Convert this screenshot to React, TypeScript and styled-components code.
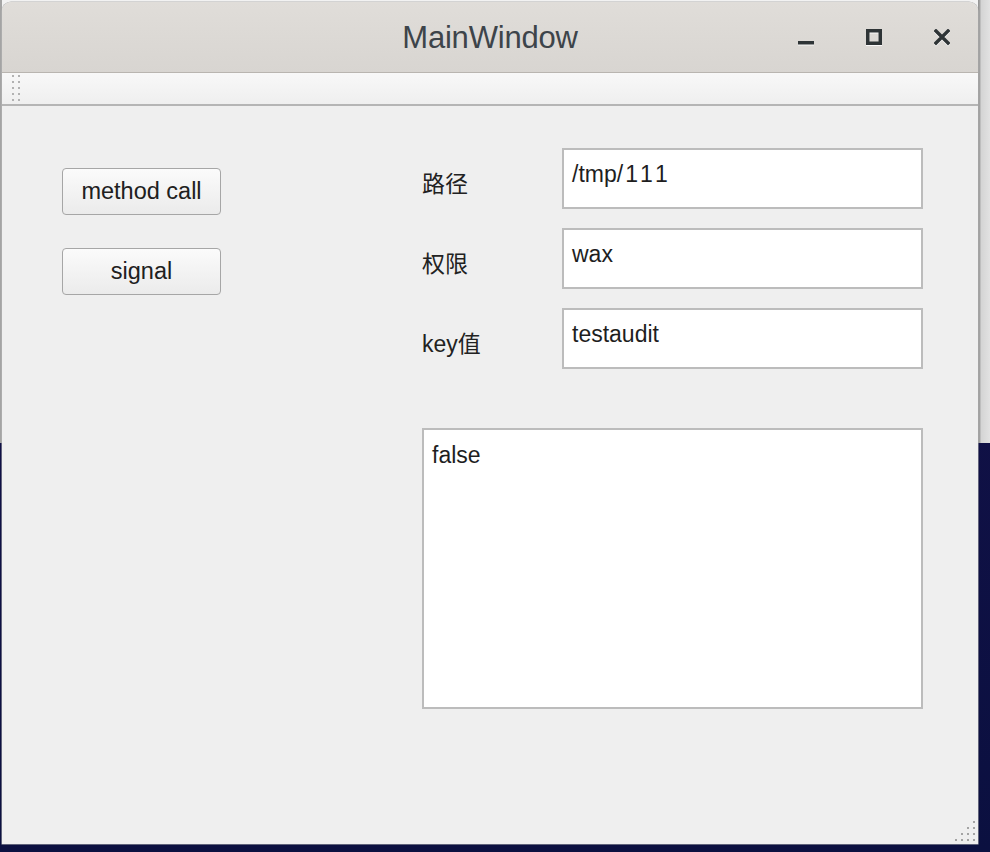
import React from "react";
import styled, { createGlobalStyle } from "styled-components";

const GlobalStyle = createGlobalStyle`
  html, body { margin: 0; padding: 0; }
  body { background: #111146; font-family: "Liberation Sans", Arial, sans-serif; }
  * { box-sizing: border-box; }
`;

const Desktop = styled.div`
  position: relative;
  width: 990px;
  height: 852px;
  padding: 2px 12px 8px 2px;
  background: linear-gradient(#15114b, #0b1040);
  overflow: hidden;
`;

const BackWindow = styled.div`
  position: absolute;
  top: 0;
  left: 0;
  width: 990px;
  height: 443px;
  background: linear-gradient(
    to right,
    #a4a4a4 0,
    #a4a4a4 2px,
    #f2f2f2 2px,
    #f2f2f2 978px,
    #8f8f8f 978px,
    #a8a8a8 980px,
    #d4d4d4 981px,
    #e2e2e2 990px
  );
`;

const Window = styled.div`
  position: relative;
  z-index: 1;
  width: 976px;
  height: 842px;
  display: flex;
  flex-direction: column;
  border-radius: 9px 9px 0 0;
  overflow: hidden;
  background: #efefef;
  box-shadow: 0 0 0 0.5px #b4b4b4;
`;

const TitleBar = styled.div`
  height: 71px;
  flex: none;
  display: grid;
  grid-template-columns: 1fr auto 1fr;
  align-items: center;
  background: linear-gradient(#e0ddd9, #d8d5d1);
  border-bottom: 1px solid #b9b5b0;
`;

const Title = styled.div`
  grid-column: 2;
  font-family: "Liberation Sans", Arial, sans-serif;
  font-size: 31px;
  color: #3d444a;
  letter-spacing: -0.2px;
  line-height: 1;
`;

const Controls = styled.div`
  grid-column: 3;
  justify-self: end;
  display: flex;
  gap: 52px;
  padding-right: 28px;
  align-items: center;
`;

const ControlButton = styled.span`
  width: 16px;
  height: 17px;
  display: block;
  filter: drop-shadow(0 1px 0 rgba(255, 255, 255, 0.85));
  svg { display: block; }
`;

const ToolBar = styled.div`
  height: 33px;
  flex: none;
  display: flex;
  align-items: flex-start;
  padding-left: 10px;
  background: linear-gradient(#f8f8f8, #efefef);
  border-bottom: 2px solid #b5b5b5;
`;

const Content = styled.div`
  flex: 1;
  display: flex;
  padding: 42px 0 0 60px;
  background: #efefef;
`;

const LeftColumn = styled.div`
  width: 360px;
  flex: none;
  display: flex;
  flex-direction: column;
  gap: 33px;
  padding-top: 20px;
`;

const PushButton = styled.button`
  width: 159px;
  height: 47px;
  border: 1px solid #a6a6a6;
  border-radius: 4px;
  background: linear-gradient(#fbfbfb, #ebebeb);
  font-family: "Liberation Sans", Arial, sans-serif;
  font-size: 23.5px;
  color: #202020;
  padding: 0;
  cursor: pointer;
`;

const Form = styled.div`
  display: grid;
  grid-template-columns: 140px 361px;
  row-gap: 19px;
  align-content: start;
`;

const Label = styled.div`
  font-family: "Liberation Sans", "Noto Sans CJK SC", sans-serif;
  font-size: 23px;
  color: #222;
  align-self: center;
  margin-top: 6px;
`;

const LineEdit = styled.div`
  width: 361px;
  height: 61px;
  border: 2px solid #bcbcbc;
  background: #fff;
  padding: 11px 8px 0;
  font-family: "Liberation Sans", Arial, sans-serif;
  font-size: 23px;
  line-height: 26px;
  color: #1e1e1e;
  white-space: pre;
`;

const WideDigits = styled.span`
  letter-spacing: 3.8px;
  margin-left: 2px;
`;

const TextArea = styled.textarea`
  grid-column: 1 / span 2;
  margin-top: 40px;
  width: 501px;
  height: 281px;
  border: 2px solid #bcbcbc;
  background: #fff;
  padding: 12px 8px;
  font-family: "Liberation Sans", Arial, sans-serif;
  font-size: 23px;
  line-height: 26px;
  color: #1e1e1e;
  resize: none;
  outline: none;
  border-radius: 0;
`;

const SizeGrip = styled.div`
  position: absolute;
  right: 3px;
  bottom: 3px;
  width: 20px;
  height: 20px;
  svg { display: block; }
`;

function Grip() {
  const dots = [];
  for (let r = 0; r < 5; r++) {
    for (let c = 0; c < 2; c++) {
      dots.push(<rect key={`${r}-${c}`} x={c * 6} y={r * 6 + 2} width={2} height={2} fill="#b2b2b2" />);
    }
  }
  return (
    <svg width="8" height="32" viewBox="0 0 8 32">
      {dots}
    </svg>
  );
}

function SizeGripDots() {
  const pts: [number, number][] = [];
  for (let r = 0; r < 4; r++) {
    for (let c = 3 - r; c < 4; c++) {
      pts.push([c * 6, r * 6]);
    }
  }
  return (
    <svg width="20" height="20" viewBox="0 0 20 20">
      {pts.map(([x, y]) => (
        <rect key={`${x}-${y}`} x={x} y={y} width={2} height={2} fill="#a4a4a4" />
      ))}
    </svg>
  );
}

export default function App() {
  return (
    <>
      <GlobalStyle />
      <Desktop>
        <BackWindow />
        <Window>
          <TitleBar>
            <Title>MainWindow</Title>
            <Controls>
              <ControlButton title="Minimize">
                <svg width="16" height="17" viewBox="0 0 16 17">
                  <rect x="0" y="12" width="16" height="3.5" fill="#2e3436" />
                </svg>
              </ControlButton>
              <ControlButton title="Maximize">
                <svg width="16" height="17" viewBox="0 0 16 17">
                  <rect x="1.75" y="1.75" width="12.5" height="12.5" fill="none" stroke="#2e3436" strokeWidth="3.5" />
                </svg>
              </ControlButton>
              <ControlButton title="Close">
                <svg width="16" height="17" viewBox="0 0 16 17">
                  <path d="M2 2 L14 14 M14 2 L2 14" stroke="#2e3436" strokeWidth="3.4" strokeLinecap="square" />
                </svg>
              </ControlButton>
            </Controls>
          </TitleBar>
          <ToolBar>
            <Grip />
          </ToolBar>
          <Content>
            <LeftColumn>
              <PushButton>method call</PushButton>
              <PushButton>signal</PushButton>
            </LeftColumn>
            <Form>
              <Label>路径</Label>
              <LineEdit>
                /tmp/<WideDigits>111</WideDigits>
              </LineEdit>
              <Label>权限</Label>
              <LineEdit>wax</LineEdit>
              <Label>key值</Label>
              <LineEdit>testaudit</LineEdit>
              <TextArea readOnly defaultValue="false" />
            </Form>
          </Content>
          <SizeGrip>
            <SizeGripDots />
          </SizeGrip>
        </Window>
      </Desktop>
    </>
  );
}
